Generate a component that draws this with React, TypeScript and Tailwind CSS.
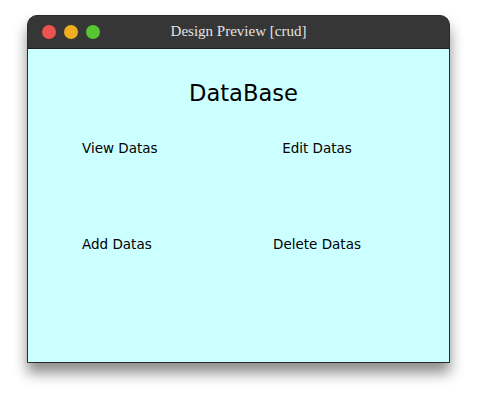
export default function App() {
  return (
    <div className="w-[477px] h-[403px] bg-white pt-[15px] pl-[27px]">
      <div className="w-[423px] h-[348px] flex flex-col rounded-t-[10px] bg-[#363636] border border-[#2a2a2a] shadow-[0_10px_14px_rgba(0,0,0,0.45)] overflow-hidden">
        <div className="relative h-[33px] flex items-center shrink-0 border-b border-[#1e1e1e]">
          <div className="flex gap-[8px] pl-[14px]">
            <span className="w-[14px] h-[14px] rounded-full bg-[#ec5350]" />
            <span className="w-[14px] h-[14px] rounded-full bg-[#f0ad1f]" />
            <span className="w-[14px] h-[14px] rounded-full bg-[#56c532]" />
          </div>
          <div
            className="absolute inset-0 flex items-center justify-center text-[15px] text-[#e4e4e4] pb-[1px]"
            style={{ fontFamily: '"Liberation Serif", serif' }}
          >
            Design Preview [crud]
          </div>
        </div>
        <div
          className="flex-1 bg-[#ccffff] text-black"
          style={{ fontFamily: '"DejaVu Sans", sans-serif' }}
        >
          <div className="pt-[31px] pl-[161px] text-[22.6px] leading-[26px]">DataBase</div>
          <div className="grid grid-cols-[150px_170px] pl-[54px] pt-[34px] gap-y-[80px] text-[13.5px] leading-[16px]">
            <div>View Datas</div>
            <div className="text-center">Edit Datas</div>
            <div>Add Datas</div>
            <div className="text-center">Delete Datas</div>
          </div>
        </div>
      </div>
    </div>
  );
}
